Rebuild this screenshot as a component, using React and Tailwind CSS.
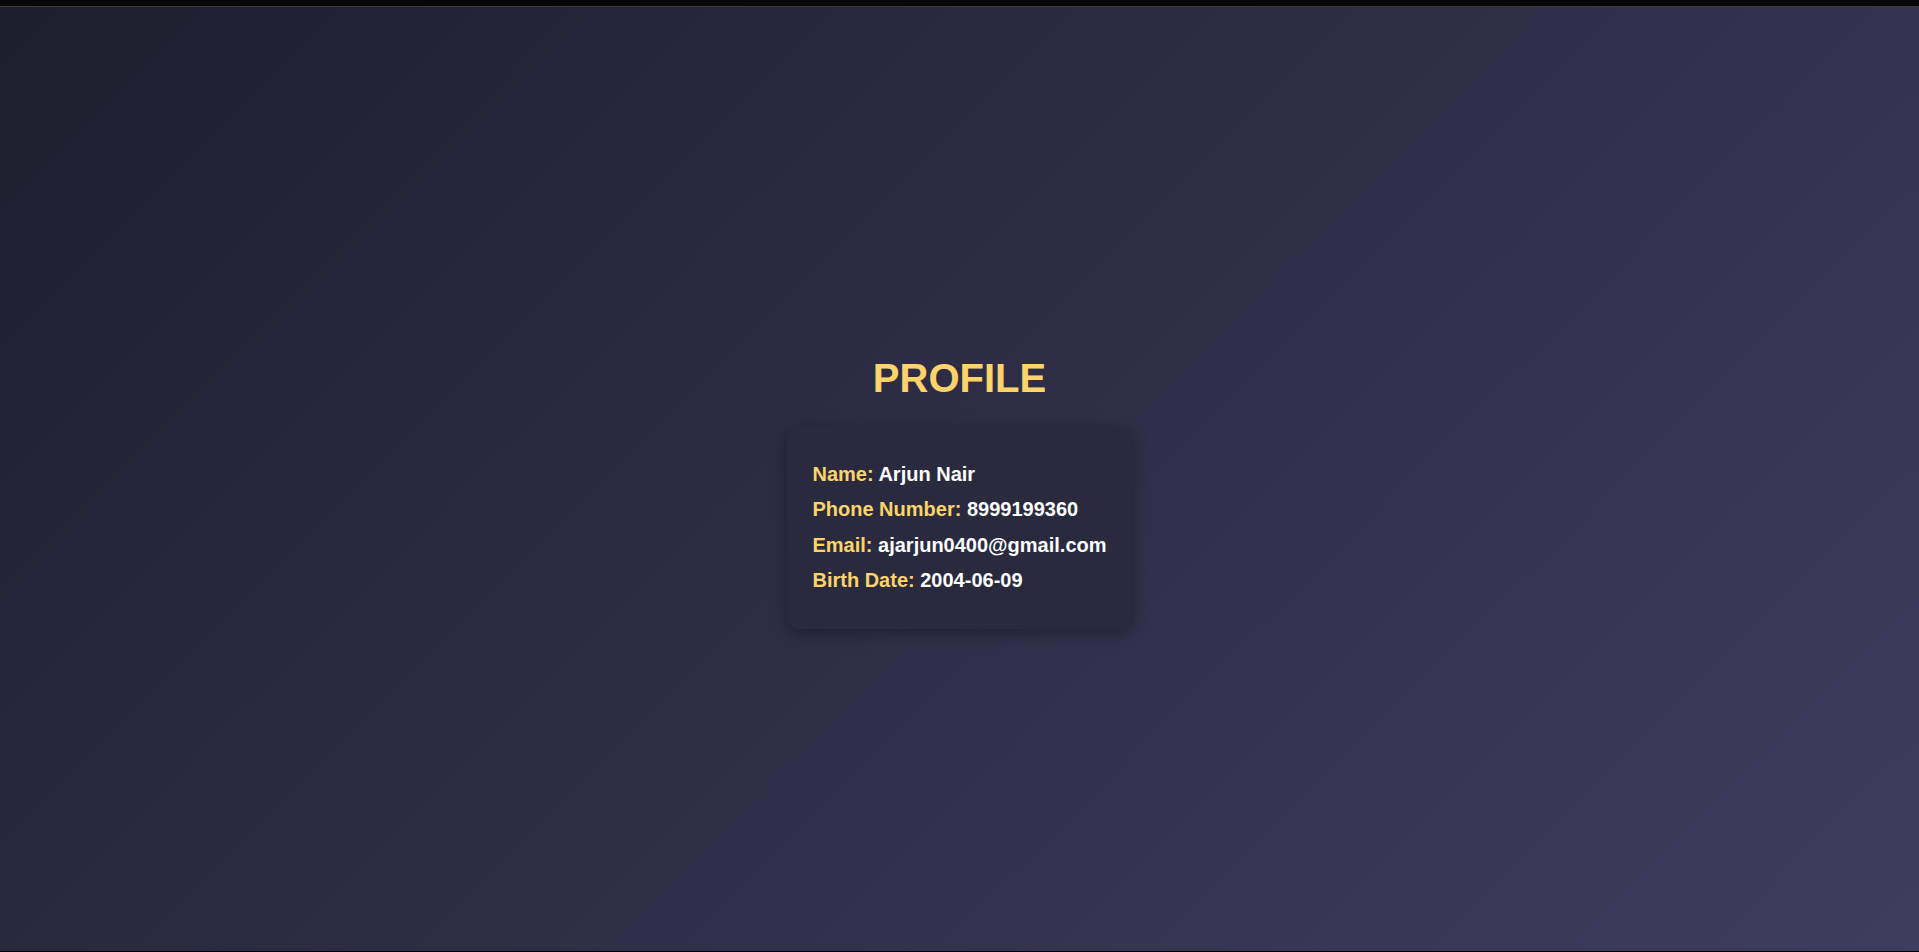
const rows = [
  { label: 'Name:', value: 'Arjun Nair' },
  { label: 'Phone Number:', value: '8999199360' },
  { label: 'Email:', value: 'ajarjun0400@gmail.com' },
  { label: 'Birth Date:', value: '2004-06-09' },
];

export default function App() {
  return (
    <div className="h-screen flex flex-col font-['Liberation_Sans',Arial,sans-serif]">
      <div className="h-[7px] shrink-0 bg-[#070707] border-b border-[#3c3c3c]" />
      <main className="flex-1 flex flex-col items-center justify-center pt-[25px] bg-[linear-gradient(135deg,#1e1e2e,#3f3d5f)]">
        <h2 className="text-[40px] leading-[46px] font-bold text-[#ffd369] mb-[26px]">PROFILE</h2>
        <div className="rounded-[12px] bg-[#2a2a3f] px-[25px] py-[30px] shadow-[0_4px_15px_rgba(0,0,0,0.35)]">
          {rows.map(r => (
            <p key={r.label} className="text-[20px] leading-[35.5px] font-bold whitespace-nowrap">
              <span className="text-[#ffd369]">{r.label}</span>{' '}
              <span className="text-white">{r.value}</span>
            </p>
          ))}
        </div>
      </main>
      <div className="h-px shrink-0 bg-black" />
    </div>
  );
}
